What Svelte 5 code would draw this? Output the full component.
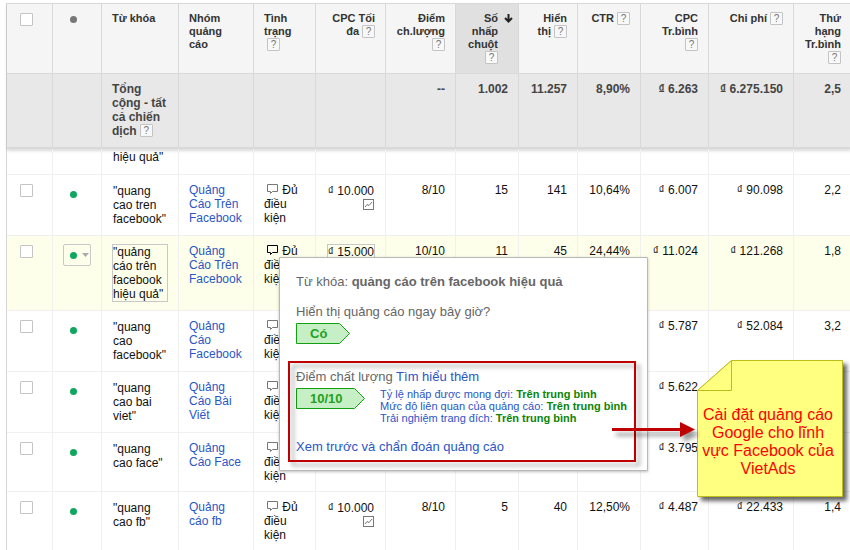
<script>
  const columns = [
    { key: 'check', width: 46 },
    { key: 'dot', width: 49 },
    { key: 'keyword', width: 77, title: 'Từ khóa' },
    { key: 'group', width: 75, title: 'Nhóm\nquảng\ncáo' },
    { key: 'status', width: 62, title: 'Tình\ntrạng\n', help: true },
    { key: 'bid', width: 70, title: 'CPC Tối\nđa', help: true, num: true },
    { key: 'score', width: 70, title: 'Điểm\nch.lượng\n', help: true, num: true },
    { key: 'clicks', width: 63, title: 'Số\nnhấp\nchuột\n', help: true, num: true, sorted: true },
    { key: 'views', width: 59, title: 'Hiển\nthị', help: true, num: true },
    { key: 'ctr', width: 63, title: 'CTR', help: true, num: true },
    { key: 'cpc', width: 68, title: 'CPC\nTr.bình\n', help: true, num: true },
    { key: 'cost', width: 85, title: 'Chi phí', help: true, num: true },
    { key: 'rank', width: 57, title: 'Thứ\nhạng\nTr.bình\n', help: true, num: true }
  ];

  const totals = {
    score: '--', clicks: '1.002', views: '11.257', ctr: '8,90%',
    cpc: '₫ 6.263', cost: '₫ 6.275.150', rank: '2,5'
  };

  const metrics = ['score', 'clicks', 'views', 'ctr', 'cpc', 'cost', 'rank'];

  const rows = [
    { keyword: '"quang\ncao tren\nfacebook"', group: 'Quảng\nCáo Trên\nFacebook', bid: '₫ 10.000', score: '8/10', clicks: '15', views: '141', ctr: '10,64%', cpc: '₫ 6.007', cost: '₫ 90.098', rank: '2,2' },
    { keyword: '"quảng\ncáo trên\nfacebook\nhiệu quả"', group: 'Quảng\nCáo Trên\nFacebook', bid: '₫ 15.000', score: '10/10', clicks: '11', views: '45', ctr: '24,44%', cpc: '₫ 11.024', cost: '₫ 121.268', rank: '1,8', active: true },
    { keyword: '"quang\ncao\nfacebook"', group: 'Quảng\nCáo\nFacebook', cpc: '₫ 5.787', cost: '₫ 52.084', rank: '3,2' },
    { keyword: '"quang\ncao bai\nviet"', group: 'Quảng\nCáo Bài\nViết', cpc: '₫ 5.622' },
    { keyword: '"quang\ncao face"', group: 'Quảng\nCáo Face', cpc: '₫ 3.795' },
    { keyword: '"quang\ncao fb"', group: 'Quảng\ncáo fb', bid: '₫ 10.000', score: '8/10', clicks: '5', views: '40', ctr: '12,50%', cpc: '₫ 4.487', cost: '₫ 22.433', rank: '1,4' }
  ];

  const factors = [
    ['Tỷ lệ nhấp được mong đợi:', 'Trên trung bình'],
    ['Mức độ liên quan của quảng cáo:', 'Trên trung bình'],
    ['Trải nghiệm trang đích:', 'Trên trung bình']
  ];
</script>

{#snippet help()}<button class="help" type="button">?</button>{/snippet}

{#snippet tag(text, width)}
  <div class="tag" style:width="{width}px">
    <svg {width} height="21" aria-hidden="true">
      <polygon points="0.5,0.5 {width - 10.5},0.5 {width - 0.5},10.5 {width - 10.5},20.5 0.5,20.5" fill="#c6efc6" stroke="#12a012" />
    </svg>
    <span>{text}</span>
  </div>
{/snippet}

<main>
  <table>
    <colgroup>
      {#each columns as c}<col style:width="{c.width}px" />{/each}
    </colgroup>
    <thead>
      <tr class="titles">
        {#each columns as c}
          <th class:num={c.num} class:sorted={c.sorted}>
            {#if c.key === 'check'}
              <input type="checkbox" aria-label="Chọn tất cả" />
            {:else if c.key === 'dot'}
              <span class="state head"><i></i></span>
            {:else}
              <div class="title">
                <span>{c.title}{#if c.help}{@render help()}{/if}</span>
                {#if c.sorted}
                  <svg width="9" height="9" viewBox="0 0 9 9" aria-hidden="true">
                    <path d="M4.5 0V7M1 4L4.5 7.5L8 4" fill="none" stroke="#222" stroke-width="2" />
                  </svg>
                {/if}
              </div>
            {/if}
          </th>
        {/each}
      </tr>
      <tr class="totals">
        <td></td>
        <td></td>
        <td>Tổng<br />cộng - tất<br />cả chiến<br />dịch{@render help()}</td>
        <td></td>
        <td></td>
        <td></td>
        {#each metrics as m}<td class="num">{totals[m]}</td>{/each}
      </tr>
    </thead>
    <tbody>
      <tr class="partial">
        {#each columns as c}<td>{c.key === 'keyword' ? 'hiệu quả"' : ''}</td>{/each}
      </tr>
      {#each rows as r}
        <tr class:active={r.active}>
          <td><input type="checkbox" aria-label={r.keyword} /></td>
          <td>
            <button class="state" type="button" aria-label="Trạng thái">
              <i></i>
              {#if r.active}
                <svg width="7" height="4" aria-hidden="true"><path d="M0 0H7L3.5 4Z" fill="#aaa" /></svg>
              {/if}
            </button>
          </td>
          <td><button class="edit keyword" type="button">{r.keyword}</button></td>
          <td><a href="#group">{r.group}</a></td>
          <td class="status">
            <svg width="12" height="10" viewBox="0 0 12 10" aria-hidden="true">
              <path d="M0.5 0.5H10.5V7.5H5.5L3.5 9.5V7.5H0.5Z" fill="none" stroke="currentColor" />
            </svg> Đủ<br />điều<br />kiện
          </td>
          <td class="num">
            {#if r.bid}
              <button class="edit" type="button">{r.bid}</button>
              <svg class="chart" width="11" height="11" viewBox="0 0 11 11" aria-hidden="true">
                <rect x="0.5" y="0.5" width="10" height="10" fill="#fff" stroke="#777" />
                <path d="M2 8L4 5.5L6 6.5L9 3" fill="none" stroke="#777" />
              </svg>
            {/if}
          </td>
          {#each metrics as m}<td class="num">{r[m] ?? ''}</td>{/each}
        </tr>
      {/each}
    </tbody>
  </table>

  <section class="popup">
    <p>Từ khóa: <b>quảng cáo trên facebook hiệu quả</b></p>
    <p class="question">Hiển thị quảng cáo ngay bây giờ?</p>
    {@render tag('Có', 54)}
    <p class="quality">Điểm chất lượng <a href="#more">Tìm hiểu thêm</a></p>
    <div class="score">
      {@render tag('10/10', 69)}
      <ul>
        {#each factors as [name, value]}<li>{name} <b>{value}</b></li>{/each}
      </ul>
    </div>
    <p class="diagnose"><a href="#diagnose">Xem trước và chẩn đoán quảng cáo</a></p>
  </section>

  <div class="frame"></div>

  <aside class="note">
    <svg width="146" height="137" viewBox="0 0 146 137" aria-hidden="true">
      <path d="M34.5 0.5H145.5V136.5H0.5V30.5Z" fill="#ffff80" stroke="#bcbc1c" />
      <path d="M34.5 0.5V30.5H0.5Z" fill="#ffff80" stroke="#bcbc1c" />
    </svg>
    <p>Cài đặt quảng cáo<br />Google cho lĩnh<br />vực Facebook của<br />VietAds</p>
  </aside>

  <svg class="arrow" width="84" height="16" viewBox="0 0 84 16" aria-hidden="true">
    <path d="M0 6H68V0L83 7.5L68 15V9H0Z" fill="#c00000" />
  </svg>
</main>

<style>
  :global(body) {
    margin: 0;
    background: #fff;
  }

  main {
    position: relative;
    box-sizing: border-box;
    height: 100vh;
    padding: 3px 0 0 6px;
    overflow: hidden;
    font: 12px/14px "Liberation Sans", Arial, sans-serif;
    color: #111;
  }

  button {
    font: inherit;
    color: inherit;
    background: none;
  }

  a {
    color: #2a56c6;
    text-decoration: none;
    white-space: pre-line;
  }

  p,
  ul {
    margin: 0;
    padding: 0;
    list-style: none;
  }

  table {
    width: calc(100% + 1px);
    table-layout: fixed;
    border-spacing: 0;
    border-left: 1px solid #d6d6d6;
  }

  th,
  td {
    padding: 8px 10px;
    border-right: 1px solid #f0f0f0;
    border-bottom: 1px solid #f0f0f0;
    text-align: left;
    vertical-align: top;
    white-space: nowrap;
  }

  th:last-child,
  td:last-child {
    border-right: 0;
  }

  .num {
    text-align: right;
  }

  thead {
    box-shadow: 0 2px 3px rgba(0, 0, 0, 0.15);
  }

  thead th,
  thead td {
    border-color: #d9d9d9;
  }

  .titles th {
    padding-bottom: 9px;
    border-top: 1px solid #d9d9d9;
    background: #f5f5f5;
    font-size: 11px;
    line-height: 13px;
    color: #333;
  }

  .titles th.sorted {
    padding-right: 5px;
    background: #e0e0e0;
  }

  .title {
    display: flex;
    gap: 6px;
    white-space: pre;
  }

  .num .title {
    justify-content: flex-end;
  }

  .title svg {
    margin-top: 2px;
  }

  .totals td {
    padding-bottom: 9px;
    background: #e8e8e8;
    border-bottom: 2px solid #d9d9d9;
    font-weight: bold;
    color: #444;
  }

  .help {
    box-sizing: border-box;
    width: 13px;
    height: 13px;
    margin-left: 3px;
    padding: 0;
    border: 1px solid #c4c4c4;
    border-radius: 1px;
    background: #f8f8f8;
    font-size: 10px;
    font-weight: normal;
    line-height: 11px;
    color: #777;
    vertical-align: top;
  }

  input {
    appearance: none;
    display: block;
    box-sizing: border-box;
    width: 13px;
    height: 13px;
    margin: 1px 3px;
    border: 1px solid #c4c4c4;
    border-radius: 1px;
    background: #fff;
  }

  .state {
    display: flex;
    box-sizing: border-box;
    align-items: center;
    gap: 5px;
    width: 28px;
    height: 22px;
    padding: 0 0 0 6px;
    border: 1px solid transparent;
    border-radius: 2px;
  }

  .state i {
    width: 7px;
    height: 7px;
    border-radius: 50%;
    background: #0fa75e;
  }

  .state.head {
    height: 15px;
  }

  .state.head i {
    background: #777;
  }

  .partial td {
    height: 14px;
    padding: 1px 11px 10px;
  }

  .edit {
    padding: 0;
    border: 1px solid transparent;
    text-align: left;
    white-space: pre;
    vertical-align: top;
  }

  .keyword {
    width: 100%;
  }

  .active td {
    background: #feffea;
  }

  .active .state,
  .active .edit {
    border-color: #c8c8c8;
  }

  .status svg {
    margin-left: 3px;
    color: #777;
  }

  .active .status svg {
    color: #000;
  }

  .chart {
    display: block;
    margin: 0 1px 0 auto;
  }

  .popup {
    position: absolute;
    top: 257px;
    left: 279px;
    box-sizing: border-box;
    width: 369px;
    padding: 16px 16px 15px;
    border: 1px solid #b8b8b8;
    border-radius: 1px;
    background: #fff;
    box-shadow: 0 1px 3px rgba(0, 0, 0, 0.25);
    font-size: 13px;
    line-height: 16px;
    color: #666;
    white-space: nowrap;
  }

  .question {
    margin: 14px 0 3px;
  }

  .quality {
    margin: 25px 0 3px;
  }

  .diagnose {
    margin-top: 30px;
  }

  .score {
    display: flex;
    gap: 15px;
  }

  .score ul {
    font-size: 11px;
    line-height: 12px;
    height: 21px;
    color: #2a56c6;
  }

  .score b {
    color: #0a850a;
  }

  .tag {
    display: grid;
    height: 21px;
    font-weight: bold;
    line-height: 21px;
    color: #23a023;
  }

  .tag svg,
  .tag span {
    grid-area: 1 / 1;
  }

  .tag span {
    padding-left: 14px;
  }

  .frame {
    position: absolute;
    top: 361px;
    left: 288px;
    box-sizing: border-box;
    width: 348px;
    height: 101px;
    border: 2px solid #c00000;
    filter: drop-shadow(4px 4px 2px rgba(0, 0, 0, 0.35));
    pointer-events: none;
  }

  .arrow {
    position: absolute;
    top: 422px;
    left: 612px;
    filter: drop-shadow(4px 5px 2px rgba(0, 0, 0, 0.4));
  }

  .note {
    position: absolute;
    top: 360px;
    left: 697px;
    display: grid;
    width: 146px;
  }

  .note svg,
  .note p {
    grid-area: 1 / 1;
  }

  .note svg {
    filter: drop-shadow(4px 4px 2px rgba(0, 0, 0, 0.6));
  }

  .note p {
    z-index: 1;
    padding: 46px 4px 0 0;
    font-size: 16px;
    line-height: 18px;
    color: #f00;
    text-align: center;
    white-space: nowrap;
  }
</style>
